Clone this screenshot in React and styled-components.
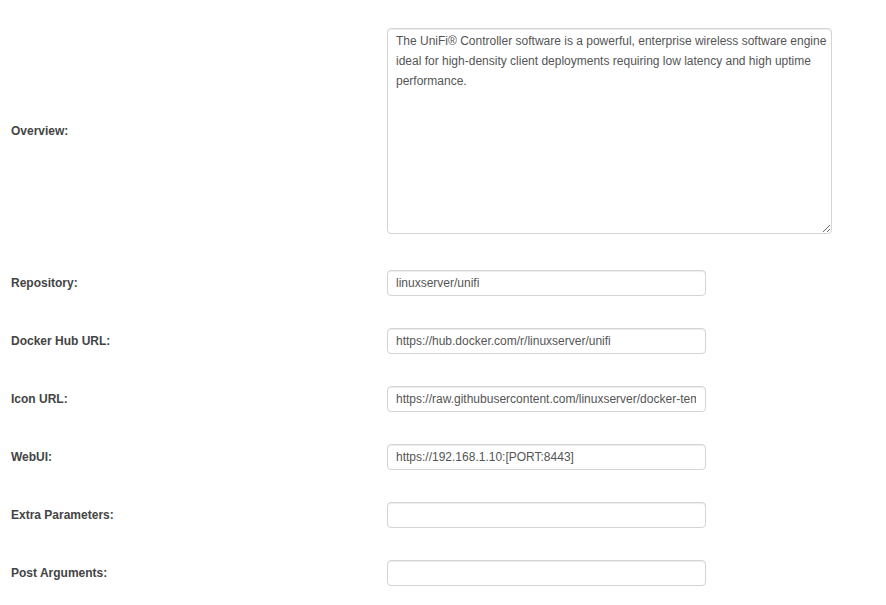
import styled, { createGlobalStyle } from "styled-components";

const GlobalStyle = createGlobalStyle`
  html, body {
    margin: 0;
    padding: 0;
    background: #fff;
    font-family: "Liberation Sans", Arial, Helvetica, sans-serif;
    font-size: 12px;
    color: #333;
  }
`;

const Form = styled.div`
  display: flex;
  flex-direction: column;
  gap: 32px;
  padding: 28px 0 0 11px;
`;

const Row = styled.div`
  display: grid;
  grid-template-columns: 376px 1fr;
  align-items: center;
  margin-bottom: ${(p) => (p.$extra ? `${p.$extra}px` : "0")};
`;

const Label = styled.label`
  font-weight: bold;
  font-size: 12px;
  color: #444;
`;

const Input = styled.input`
  box-sizing: border-box;
  width: 319px;
  height: 26px;
  padding: 0 9px 0 8px;
  border: 1px solid #d4d4d4;
  border-radius: 4px;
  box-shadow: inset 0 1px 1px rgba(0, 0, 0, 0.075);
  font-family: "Liberation Sans", Arial, sans-serif;
  font-size: 12px;
  color: #555;
  background: #fff;
  outline: none;
`;

const TextArea = styled.textarea`
  box-sizing: border-box;
  width: 445px;
  height: 206px;
  padding: 2px 4px 5px 8px;
  border: 1px solid #d4d4d4;
  border-radius: 4px;
  box-shadow: inset 0 1px 1px rgba(0, 0, 0, 0.075);
  font-family: "Liberation Sans", Arial, sans-serif;
  font-size: 12px;
  line-height: 20px;
  color: #555;
  background: #fff;
  resize: both;
  outline: none;
`;

const fields = [
  { label: "Repository:", value: "linuxserver/unifi" },
  { label: "Docker Hub URL:", value: "https://hub.docker.com/r/linuxserver/unifi" },
  {
    label: "Icon URL:",
    value:
      "https://raw.githubusercontent.com/linuxserver/docker-templates/master/linuxserver.io/img/unifi-icon.png",
  },
  { label: "WebUI:", value: "https://192.168.1.10:[PORT:8443]" },
  { label: "Extra Parameters:", value: "" },
  { label: "Post Arguments:", value: "" },
];

export default function App() {
  return (
    <>
      <GlobalStyle />
      <Form>
        <Row $extra={4}>
          <Label>Overview:</Label>
          <TextArea
            readOnly
            defaultValue="The UniFi® Controller software is a powerful, enterprise wireless software engine ideal for high-density client deployments requiring low latency and high uptime performance."
          />
        </Row>
        {fields.map((f) => (
          <Row key={f.label}>
            <Label>{f.label}</Label>
            <Input type="text" readOnly defaultValue={f.value} />
          </Row>
        ))}
      </Form>
    </>
  );
}
